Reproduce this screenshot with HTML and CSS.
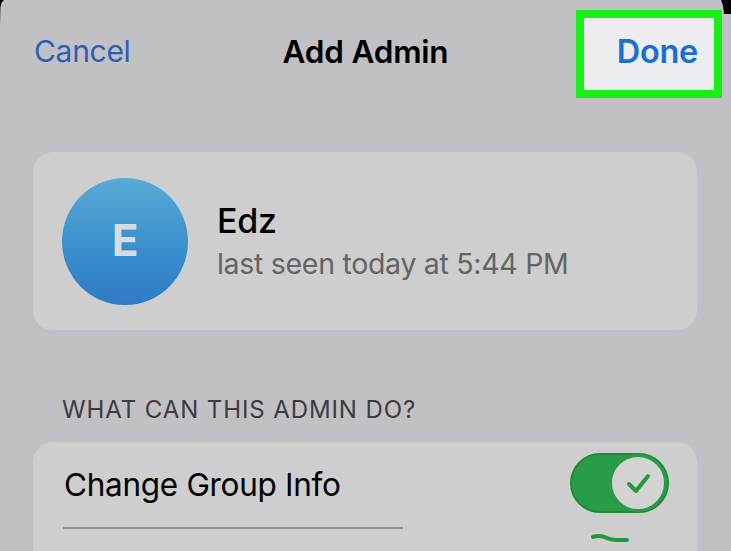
FILE: index.html
```html
<!DOCTYPE html>
<html lang="en">
<head>
<meta charset="utf-8">
<title>Add Admin</title>
<link rel="stylesheet" href="styles.css">
</head>
<body>
<div class="screen">
  <span class="corner corner-tl"></span>
  <span class="corner corner-tr"></span>
  <header class="nav">
    <a class="nav-cancel">Cancel</a>
    <h1 class="nav-title">Add Admin</h1>
    <div class="nav-right">
      <div class="done-box"><a class="nav-done">Done</a></div>
    </div>
  </header>

  <section class="card user-card">
    <div class="avatar"><span>E</span></div>
    <div class="user-info">
      <div class="user-name">Edz</div>
      <div class="user-status">last seen today at 5:44 PM</div>
    </div>
  </section>

  <div class="section-label">WHAT CAN THIS ADMIN DO?</div>

  <section class="card perms-card">
    <div class="perm-row">
      <span class="perm-label">Change Group Info</span>
      <span class="toggle">
        <span class="knob">
          <svg viewBox="0 0 40 40" width="40" height="40"><path d="M11 21 L18 28 L30 13" fill="none" stroke="#1f9a35" stroke-width="4" stroke-linecap="round" stroke-linejoin="round"/></svg>
        </span>
      </span>
    </div>
    <div class="perm-row perm-row-next">
      <span class="separator"></span>
      <svg class="partial" viewBox="0 0 40 12" width="40" height="12"><path d="M2 5 C8 3 12 4 16 6 C22 9 28 8 36 8" fill="none" stroke="#1f9a3f" stroke-width="4" stroke-linecap="round"/></svg>
    </div>
  </section>
</div>
</body>
</html>
```

FILE: styles.css
```css
* { box-sizing: border-box; }
html, body { margin: 0; padding: 0; }
body {
  width: 731px;
  height: 551px;
  overflow: hidden;
  background: #c1c0c5;
  font-family: Inter, "Liberation Sans", sans-serif;
}
.screen {
  position: relative;
  width: 731px;
  height: 551px;
  padding-top: 10px;
  overflow: hidden;
}
.corner {
  position: absolute;
  top: 0;
  background: #000;
}
.corner-tl {
  left: -20px;
  width: 24px;
  height: 30px;
  clip-path: polygon(0 0, 100% 0, 90% 8%, 85% 25%, 83% 100%, 0 100%);
}
.corner-tr {
  right: 0;
  width: 10px;
  height: 14px;
  clip-path: polygon(0 0, 100% 0, 100% 100%, 30% 100%, 20% 40%);
}
.nav {
  display: grid;
  grid-template-columns: 1fr auto 1fr;
  align-items: center;
  height: 88px;
  padding: 0 9px;
}
.nav-cancel {
  margin-left: 25px;
  margin-top: -6px;
  font-size: 30px;
  color: #2c5fb4;
  letter-spacing: -0.3px;
}
.nav-title {
  margin: -5px 0 0 0;
  font-size: 31.5px;
  font-weight: 600;
  color: #000;
  letter-spacing: -0.2px;
}
.nav-right {
  display: flex;
  justify-content: flex-end;
}
.done-box {
  width: 146px;
  height: 88px;
  border: 8px solid #17f014;
  background: #ececf1;
  display: flex;
  align-items: center;
  justify-content: flex-end;
  padding-right: 16px;
  padding-bottom: 5px;
}
.nav-done {
  font-size: 32.5px;
  font-weight: 600;
  color: #1b6fd0;
  letter-spacing: -0.3px;
}
.card {
  margin-left: 33px;
  width: 664px;
  background: #cecece;
  border-radius: 20px;
}
.user-card {
  margin-top: 54px;
  height: 178px;
  display: flex;
  align-items: center;
  padding-left: 29px;
  gap: 29px;
}
.avatar {
  width: 126px;
  height: 127px;
  border-radius: 50%;
  background: linear-gradient(180deg, #5aabd6 0%, #3a8fcd 55%, #2f7bc6 100%);
  display: flex;
  align-items: center;
  justify-content: center;
  flex-shrink: 0;
}
.avatar span {
  font-size: 44px;
  font-weight: 700;
  color: #d9dbe2;
  margin-top: -2px;
}
.user-info {
  display: flex;
  flex-direction: column;
  gap: 5px;
  margin-top: 1px;
}
.user-name {
  font-size: 34px;
  font-weight: 500;
  color: #000;
  letter-spacing: -0.3px;
  line-height: 40px;
}
.user-status {
  font-size: 28.5px;
  color: #646464;
  letter-spacing: -0.3px;
  line-height: 36px;
}
.section-label {
  margin: 66px 0 0 62px;
  font-size: 24px;
  color: #3c3c3c;
  letter-spacing: 0.9px;
  line-height: 28px;
}
.perms-card {
  margin-top: 18px;
  height: 140px;
}
.perm-row {
  position: relative;
  height: 85px;
  display: flex;
  align-items: center;
  justify-content: space-between;
  padding-left: 31px;
  padding-right: 28px;
}
.perm-label {
  font-size: 31.5px;
  color: #000;
  letter-spacing: -0.3px;
  margin-top: 0;
}
.toggle {
  width: 99px;
  height: 60px;
  border-radius: 30px;
  background: #2a9c47;
  border: 2px solid #1f8a3a;
  display: flex;
  align-items: center;
  justify-content: flex-end;
  margin-top: -3px;
}
.knob {
  width: 58px;
  height: 58px;
  border-radius: 50%;
  background: #d3d3d3;
  border: 3px solid #2a9c47;
  display: flex;
  align-items: center;
  justify-content: center;
}
.perm-row-next {
  height: 40px;
  align-items: flex-start;
}
.separator {
  display: block;
  width: 340px;
  height: 2px;
  margin-left: -1px;
  background: #8e8e8e;
}
.partial {
  position: absolute;
  left: 558px;
  top: 5px;
}
```
